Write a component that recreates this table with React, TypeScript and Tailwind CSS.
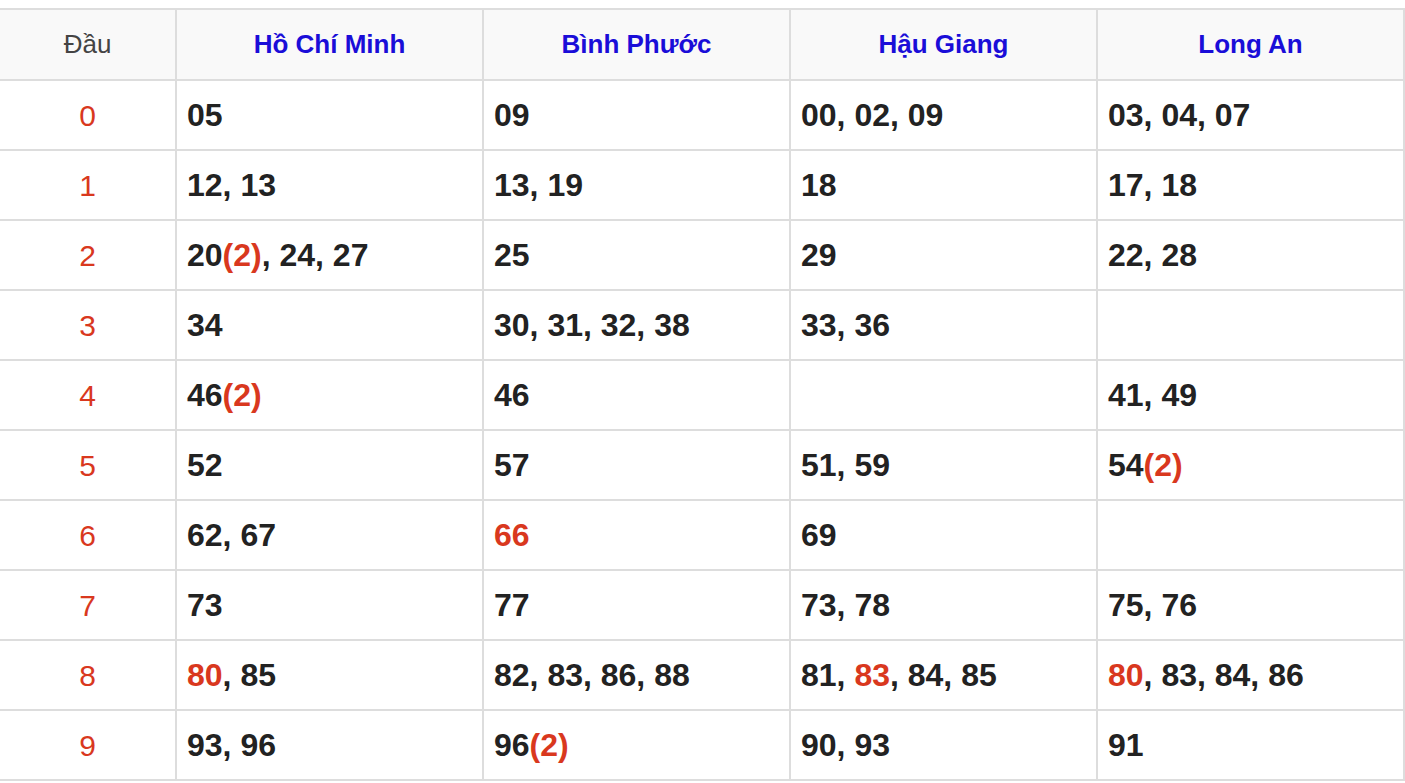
import React from "react";

type Part = { t: string; red?: boolean };
const R = (t: string): Part => ({ t, red: true });
const N = (t: string): Part => ({ t });

const headers = ["Hồ Chí Minh", "Bình Phước", "Hậu Giang", "Long An"];

const rows: Part[][][] = [
  [[N("05")], [N("09")], [N("00, 02, 09")], [N("03, 04, 07")]],
  [[N("12, 13")], [N("13, 19")], [N("18")], [N("17, 18")]],
  [[N("20"), R("(2)"), N(", 24, 27")], [N("25")], [N("29")], [N("22, 28")]],
  [[N("34")], [N("30, 31, 32, 38")], [N("33, 36")], []],
  [[N("46"), R("(2)")], [N("46")], [], [N("41, 49")]],
  [[N("52")], [N("57")], [N("51, 59")], [N("54"), R("(2)")]],
  [[N("62, 67")], [R("66")], [N("69")], []],
  [[N("73")], [N("77")], [N("73, 78")], [N("75, 76")]],
  [[R("80"), N(", 85")], [N("82, 83, 86, 88")], [N("81, "), R("83"), N(", 84, 85")], [R("80"), N(", 83, 84, 86")]],
  [[N("93, 96")], [N("96"), R("(2)")], [N("90, 93")], [N("91")]],
];

export default function App() {
  return (
    <div className="w-[1405px] h-[783px] bg-white overflow-hidden" style={{ fontFamily: '"Liberation Sans", Arial, Helvetica, sans-serif' }}>
      <div className="mt-[8px] border-t-2 border-[#dddddd] grid grid-cols-[177px_307px_307px_307px_307px]">
        <div className="h-[71px] bg-[#f9f9f9] border-r-2 border-b-2 border-[#dddddd] flex items-center justify-center text-[26px] text-[#444444]">
          Đầu
        </div>
        {headers.map((h) => (
          <div key={h} className="h-[71px] bg-[#f9f9f9] border-r-2 border-b-2 border-[#dddddd] flex items-center justify-center text-[26px] font-bold text-[#1a0dd8]">
            {h}
          </div>
        ))}
        {rows.map((row, i) => (
          <React.Fragment key={i}>
            <div className="h-[70px] border-r-2 border-b-2 border-[#dddddd] flex items-center justify-center text-[30px] text-[#d9381e]">
              {i}
            </div>
            {row.map((cell, j) => (
              <div key={j} className="h-[70px] border-r-2 border-b-2 border-[#dddddd] flex items-center pl-[10px] text-[32px] font-bold text-[#222222] whitespace-pre">
                {cell.map((p, k) => (
                  <span key={k} className={p.red ? "text-[#d9381e]" : ""}>
                    {p.t}
                  </span>
                ))}
              </div>
            ))}
          </React.Fragment>
        ))}
      </div>
    </div>
  );
}
